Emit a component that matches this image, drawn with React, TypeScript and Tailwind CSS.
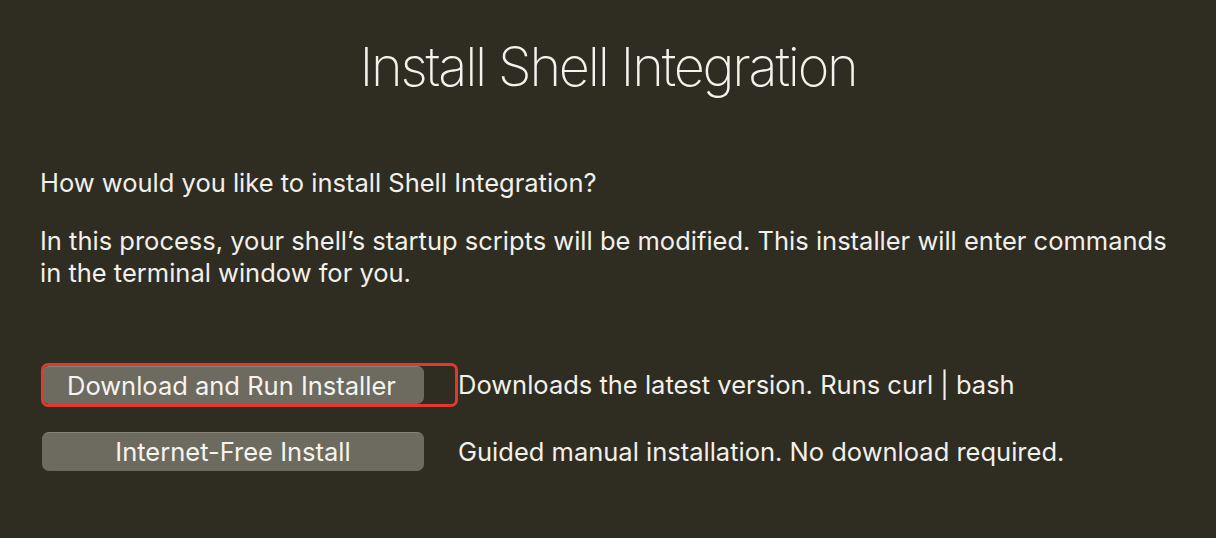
export default function App() {
  const font = { fontFamily: 'Inter, "Noto Sans", sans-serif' };

  return (
    <div
      className="w-full h-[538px] bg-[#2f2c22] text-[#f2f0ea] px-[40px] overflow-hidden"
      style={font}
    >
      <h1 className="pt-[29px] text-center text-[54px] leading-[76px] font-extralight tracking-[-2.2px] text-[#f4f2ec]">
        Install Shell Integration
      </h1>

      <p className="mt-[62px] text-[25.5px] leading-[32px]">
        How would you like to install Shell Integration?
      </p>

      <p className="mt-[26px] text-[25.5px] leading-[32px]">
        In this process, your shell’s startup scripts will be modified. This installer will enter commands
        <br />
        in the terminal window for you.
      </p>

      <div className="mt-[77px] flex flex-col gap-[28px]">
        <div className="flex items-center">
          <div className="relative ml-[2px] w-[382px]">
            <button className="w-full h-[38px] rounded-[7px] bg-[#6d6a60] border-t border-[#858278] text-[25.5px] text-[#f6f4ee] text-left pl-[25px] pr-[28px]">
              Download and Run Installer
            </button>
            <div className="absolute -left-[1px] -top-[3px] w-[417px] h-[44px] rounded-[7px] border-[3px] border-[#e2392d] pointer-events-none" />
          </div>
          <span className="ml-[34px] text-[25.5px]">Downloads the latest version. Runs curl | bash</span>
        </div>

        <div className="flex items-center">
          <button className="ml-[2px] w-[382px] h-[39px] rounded-[7px] bg-[#6d6a60] border-t border-[#858278] text-[25.5px] text-[#f6f4ee]">
            Internet-Free Install
          </button>
          <span className="ml-[34px] text-[25.5px]">Guided manual installation. No download required.</span>
        </div>
      </div>
    </div>
  );
}
